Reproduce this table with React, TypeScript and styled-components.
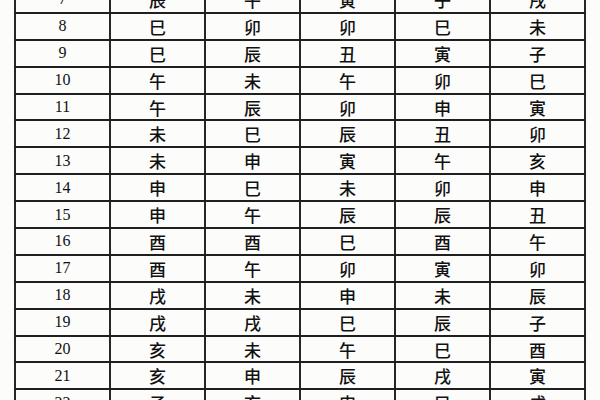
import React from 'react';
import styled, { createGlobalStyle } from 'styled-components';

const rows: [number, string[]][] = [
  [7, ['辰', '午', '寅', '子', '戌']],
  [8, ['巳', '卯', '卯', '巳', '未']],
  [9, ['巳', '辰', '丑', '寅', '子']],
  [10, ['午', '未', '午', '卯', '巳']],
  [11, ['午', '辰', '卯', '申', '寅']],
  [12, ['未', '巳', '辰', '丑', '卯']],
  [13, ['未', '申', '寅', '午', '亥']],
  [14, ['申', '巳', '未', '卯', '申']],
  [15, ['申', '午', '辰', '辰', '丑']],
  [16, ['酉', '酉', '巳', '酉', '午']],
  [17, ['酉', '午', '卯', '寅', '卯']],
  [18, ['戌', '未', '申', '未', '辰']],
  [19, ['戌', '戌', '巳', '辰', '子']],
  [20, ['亥', '未', '午', '巳', '酉']],
  [21, ['亥', '申', '辰', '戌', '寅']],
  [22, ['子', '亥', '申', '巳', '戌']],
];

export default function App() {
  return (
    <>
      <GlobalStyle />
      <Page>
        <Sheet>
          <tbody>
            {rows.map(([n, cells]) => (
              <Row key={n}>
                <Cell $num>{n}</Cell>
                {cells.map((c, i) => (
                  <Cell key={i}>{c}</Cell>
                ))}
              </Row>
            ))}
          </tbody>
        </Sheet>
      </Page>
    </>
  );
}

const GlobalStyle = createGlobalStyle`
  html, body {
    margin: 0;
    padding: 0;
    background: #fcfcfb;
    overflow: hidden;
  }
`;

const Page = styled.div`
  width: 600px;
  height: 400px;
  overflow: hidden;
  padding-left: 14px;
  box-sizing: border-box;
`;

const Sheet = styled.table`
  margin-top: -15px;
  width: 572px;
  border-collapse: collapse;
  table-layout: fixed;
  border: 2px solid #1a1a1a;
`;

const Row = styled.tr`
  height: 26.9px;
`;

const Cell = styled.td<{ $num?: boolean }>`
  padding: 0;
  height: 26.9px;
  box-sizing: border-box;
  text-align: center;
  vertical-align: middle;
  border-top: 2px solid #1f1f1f;
  border-bottom: 2px solid #1f1f1f;
  border-left: 2px solid #262626;
  border-right: 2px solid #262626;
  color: #111;
  font-family: ${(p) =>
    p.$num
      ? '"Liberation Serif", "DejaVu Serif", serif'
      : '"Noto Sans CJK SC", "Noto Sans CJK TC", sans-serif'};
  font-size: ${(p) => (p.$num ? '16px' : '17px')};
  font-weight: ${(p) => (p.$num ? 400 : 500)};
  line-height: 1;
`;
